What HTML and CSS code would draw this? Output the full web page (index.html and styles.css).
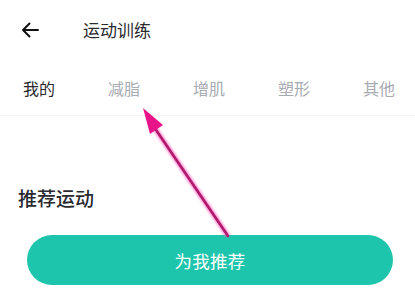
FILE: index.html
```html
<!DOCTYPE html>
<html lang="zh">
<head>
<meta charset="utf-8">
<link rel="stylesheet" href="styles.css">
</head>
<body>
<div class="page">
  <header class="topbar">
    <span class="back">
      <svg width="18" height="16" viewBox="0 0 18 16"><path d="M17 8H2M8.5 1.5L2 8l6.5 6.5" fill="none" stroke="#111" stroke-width="2" stroke-linecap="round" stroke-linejoin="round"/></svg>
    </span>
    <h1 class="title">运动训练</h1>
  </header>
  <nav class="tabs">
    <span class="tab active">我的</span>
    <span class="tab">减脂</span>
    <span class="tab">增肌</span>
    <span class="tab">塑形</span>
    <span class="tab">其他</span>
  </nav>
  <h2 class="section">推荐运动</h2>
  <button class="cta">为我推荐</button>
  <svg class="annot" width="415" height="293" viewBox="0 0 415 293">
    <defs>
      <filter id="glow" x="-20%" y="-20%" width="140%" height="140%">
        <feGaussianBlur stdDeviation="1.2"/>
      </filter>
    </defs>
    <g filter="url(#glow)" opacity="0.7">
      <line x1="152" y1="124" x2="228" y2="236" stroke="#ff5fc0" stroke-width="5"/>
    </g>
    <line x1="152" y1="124" x2="228" y2="236" stroke="#b01a6c" stroke-width="2.6" stroke-linecap="round"/>
    <polygon points="143,108 163,125 150,134" fill="#e8158a"/>
  </svg>
</div>
</body>
</html>
```
FILE: styles.css
```css
html, body {
  margin: 0;
  padding: 0;
  background: #fff;
}
body {
  font-family: "Noto Sans CJK SC", "Noto Sans", sans-serif;
  width: 415px;
  height: 293px;
  overflow: hidden;
}
.page {
  position: relative;
  width: 415px;
  height: 293px;
}
.topbar {
  height: 60px;
  display: flex;
  align-items: center;
  padding-left: 21px;
}
.back {
  display: flex;
  width: 18px;
  height: 16px;
}
.title {
  margin: 0 0 0 44px;
  font-size: 17px;
  font-weight: 400;
  color: #2a2a2e;
  line-height: 24px;
}
.tabs {
  height: 55px;
  display: flex;
  align-items: center;
  border-bottom: 1px solid #f2f2f3;
  padding-left: 23px;
  white-space: nowrap;
  overflow: hidden;
}
.tab {
  flex: none;
  width: 85px;
  font-size: 16px;
  line-height: 22px;
  color: #a7abb2;
}
.tab.active {
  color: #2a2a2e;
}
.section {
  margin: 69px 0 0 18px;
  font-size: 19px;
  font-weight: 500;
  line-height: 26px;
  color: #2a2a30;
}
.cta {
  display: block;
  margin: 24px 0 0 27px;
  width: 366px;
  height: 50px;
  border: none;
  border-radius: 25px;
  background: #1dc5ac;
  color: #fff;
  font-family: inherit;
  font-size: 17.5px;
  letter-spacing: 0.2px;
  padding: 0;
}
.annot {
  position: absolute;
  left: 0;
  top: 0;
  pointer-events: none;
}
```
